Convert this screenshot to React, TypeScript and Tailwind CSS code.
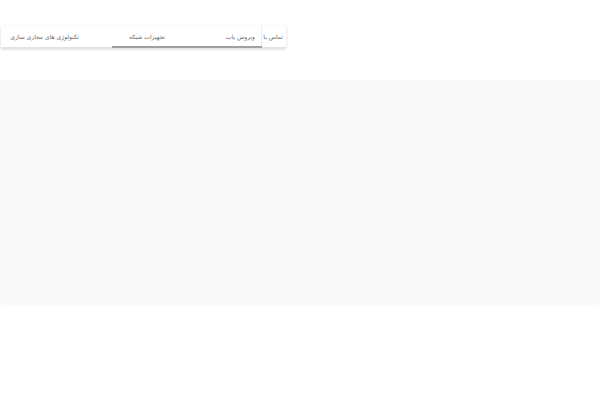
export default function App() {
  return (
    <div className="h-[400px] w-[600px] bg-white font-['DejaVu_Sans',sans-serif]">
      <div className="pt-[26px] pl-[1px]">
        <div
          dir="rtl"
          className="relative flex h-[22px] w-[285px] items-center border-b border-[#e3e3e3] bg-white text-[6px] text-[#6a6a6a] shadow-[0_1px_3px_rgba(0,0,0,0.18)]"
        >
          <div className="flex h-full w-[25px] shrink-0 items-center border-l border-[#ececec] pr-[3px] whitespace-nowrap">
            تماس با
          </div>
          <div className="flex h-full w-[94px] shrink-0 items-center pr-[6px] whitespace-nowrap">
            ویروس یاب
          </div>
          <div className="flex h-full w-[87px] shrink-0 items-center pr-[2px] whitespace-nowrap">
            تجهیزات شبکه
          </div>
          <div className="flex h-full flex-1 items-center pr-[1px] whitespace-nowrap">
            تکنولوژی های مجازی سازی
          </div>
          <span className="absolute bottom-[-1px] left-[111px] h-[2px] w-[150px] bg-[#a0a0a0]" />
        </div>
      </div>
      <div className="mt-[32px] h-[224px] w-full bg-[#f8f8f8] shadow-[0_2px_4px_rgba(0,0,0,0.03)]" />
    </div>
  );
}
